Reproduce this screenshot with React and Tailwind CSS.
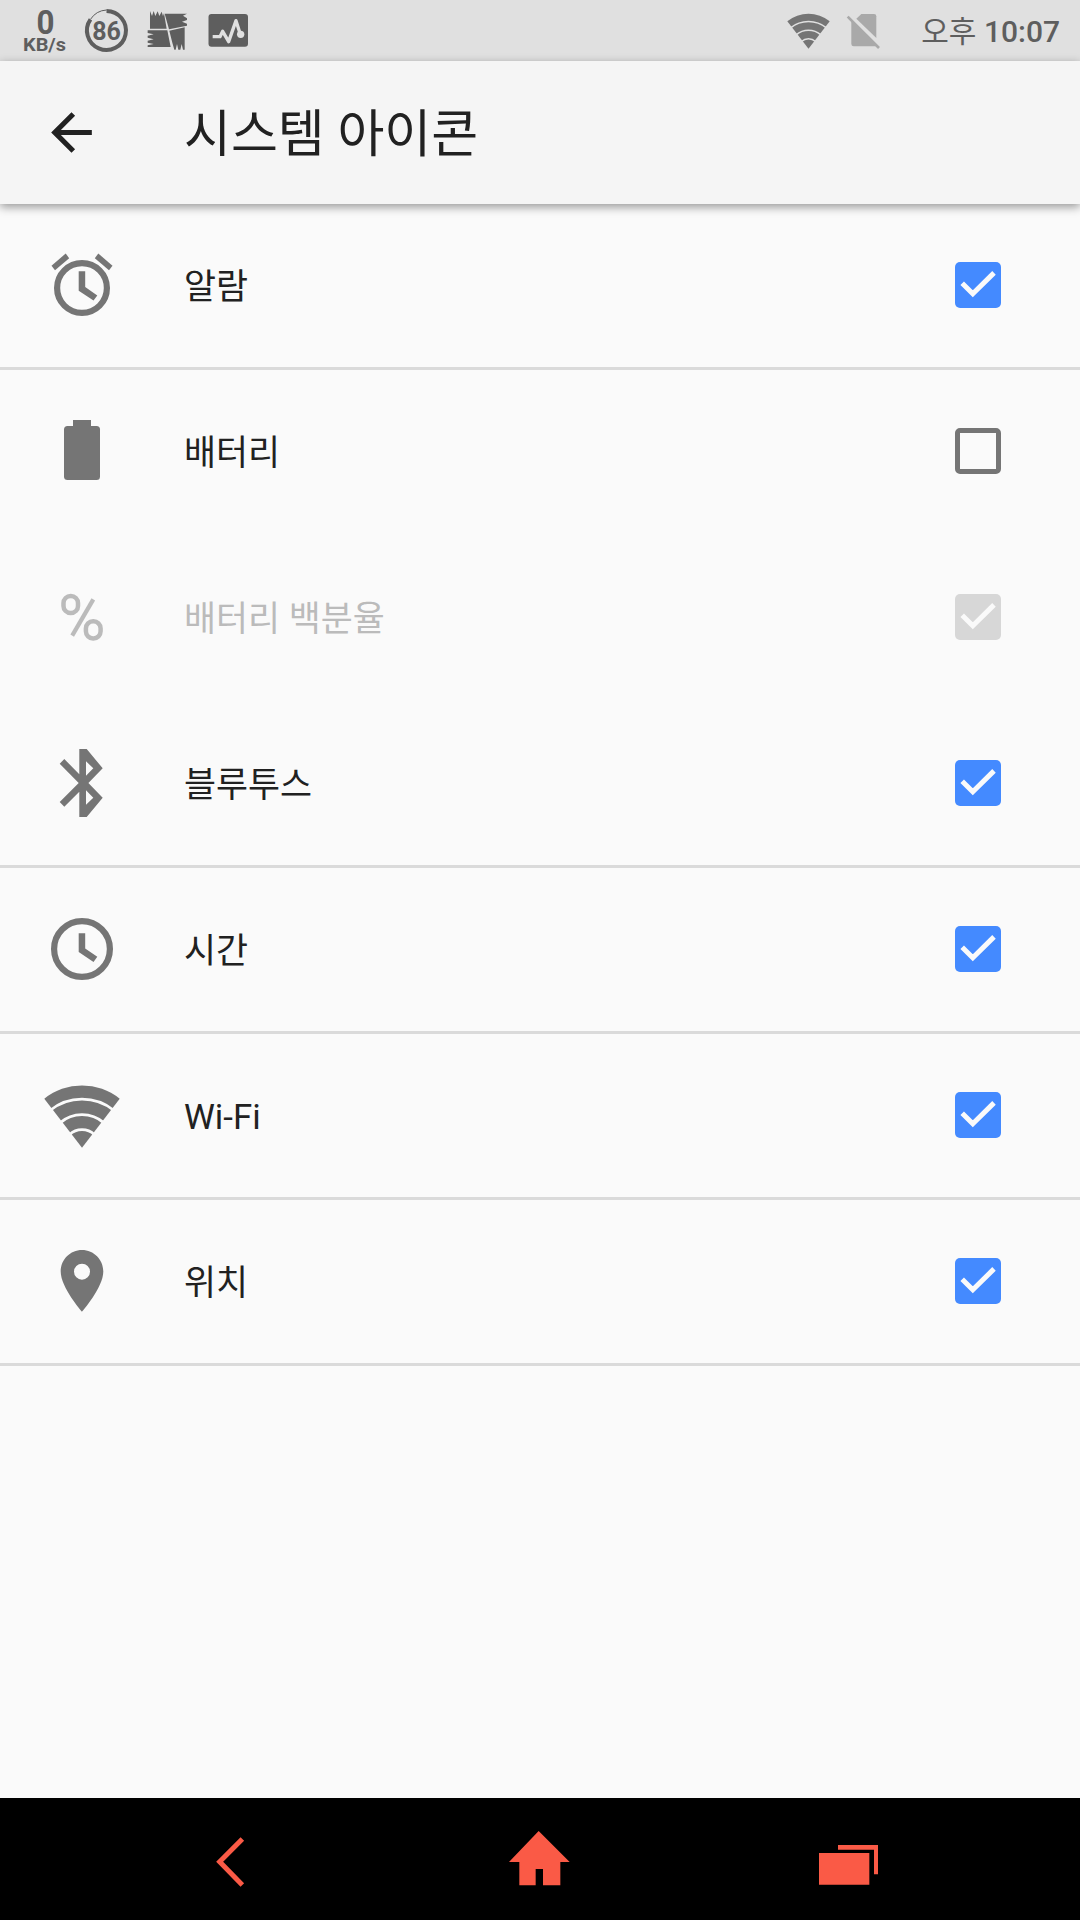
import { MdArrowBack } from 'react-icons/md';

function WifiIcon({ className, gapClass }) {
  return (
    <svg className={className} viewBox="-2 5 76 64" fill="none">
      <path d="M36 68.7L-1.7 19.7A60 60 0 0 1 73.7 19.7Z" fill="currentColor" />
      <g className={gapClass} strokeWidth="2.8">
        <path d="M4 31.5A51 51 0 0 1 68 31.5" />
        <path d="M14 43.9A33.5 33.5 0 0 1 58 43.9" />
        <path d="M23.5 55.7A18 18 0 0 1 48.5 55.7" />
      </g>
    </svg>
  );
}

function AlarmIcon() {
  return (
    <svg className="h-[72px] w-[72px]" viewBox="0 0 72 72" fill="currentColor">
      <circle cx="36" cy="39" r="24.9" fill="none" stroke="currentColor" strokeWidth="6.2" />
      <path d="M5.5 16.7L9 21.2L23.2 9.2L19.7 4.5Z" />
      <path d="M66.5 16.7L63 21.2L48.8 9.2L52.3 4.5Z" />
      <path d="M32.7 22.2H39.2V38L51.3 46.5L47.5 51.5L32.7 41.7Z" />
    </svg>
  );
}

function BatteryIcon() {
  return (
    <svg className="h-[72px] w-[72px]" viewBox="0 0 72 72" fill="currentColor">
      <rect x="27" y="5" width="18" height="8" />
      <rect x="18" y="11" width="36" height="54" rx="3.5" />
    </svg>
  );
}

function PercentIcon() {
  return (
    <svg className="h-[72px] w-[72px]" viewBox="0 0 72 72" fill="none" stroke="currentColor" strokeWidth="4.5">
      <rect x="17.5" y="14.9" width="14.5" height="17.2" rx="7.2" />
      <rect x="39.9" y="40.2" width="14.7" height="17.2" rx="7.2" />
      <path d="M47.3 18.4L26.2 54.6" strokeWidth="4.2" />
    </svg>
  );
}

function BluetoothIcon() {
  return (
    <svg className="h-[72px] w-[72px]" viewBox="0 0 72 72" fill="currentColor" fillRule="evenodd">
      <path d="M33.3 2H40.7L56.7 21.3L42.4 36L56.7 50.7L40.7 70H33.3V44.7L18.3 59.7L13.7 55L32.7 36L13.7 16.7L18.3 12L33.3 27.3ZM40 14.3V28.7L47.3 21.3ZM40 43.3V57.7L47.3 50.7Z" />
    </svg>
  );
}

function ClockIcon() {
  return (
    <svg className="h-[72px] w-[72px]" viewBox="0 0 72 72" fill="currentColor">
      <circle cx="36" cy="36" r="27.9" fill="none" stroke="currentColor" strokeWidth="6.2" />
      <path d="M32.7 20.2H39.2V35.5L51.3 43.8L47.5 48.9L32.7 39Z" />
    </svg>
  );
}

function PlaceIcon() {
  return (
    <svg className="h-[72px] w-[72px]" viewBox="0 0 72 72" fill="currentColor" fillRule="evenodd">
      <path d="M36 5C24.2 5 14.7 14.6 14.7 26.5C14.7 42.7 36 66.7 36 66.7S57.3 42.7 57.3 26.5C57.3 14.6 47.8 5 36 5ZM36 18.7A8 8 0 1 1 36 34.7A8 8 0 1 1 36 18.7Z" />
    </svg>
  );
}

const items = [
  { label: '알람', icon: <AlarmIcon />, checked: true, divider: true },
  { label: '배터리', icon: <BatteryIcon />, checked: false },
  { label: '배터리 백분율', icon: <PercentIcon />, checked: true, disabled: true },
  { label: '블루투스', icon: <BluetoothIcon />, checked: true, divider: true },
  { label: '시간', icon: <ClockIcon />, checked: true, divider: true },
  {
    label: 'Wi-Fi',
    icon: <WifiIcon className="-mx-0.5 mt-0.5 h-16 w-[76px] shrink-0" gapClass="stroke-[#fafafa]" />,
    checked: true,
    divider: true,
  },
  { label: '위치', icon: <PlaceIcon />, checked: true, divider: true },
];

function Checkbox({ checked, disabled }) {
  if (!checked) {
    return <span className="h-[46px] w-[46px] rounded-[5px] border-[5px] border-[#757575]" />;
  }
  return (
    <span className={`h-[46px] w-[46px] rounded-[5px] ${disabled ? 'bg-[#d7d7d7]' : 'bg-[#448aff]'}`}>
      <svg className="h-[46px] w-[46px]" viewBox="0 0 46 46" fill="none">
        <path d="M7.2 21.2L17.8 31.8L39 10.9" className="stroke-[#fafafa]" strokeWidth="5" />
      </svg>
    </span>
  );
}

function SettingRow({ item }) {
  return (
    <li
      className={`flex h-[166px] items-center border-b-[3px] pr-[79px] pl-[46px] ${
        item.divider ? 'border-[#dadada]' : 'border-transparent'
      }`}
    >
      <span className={`-mt-px flex h-[72px] w-[72px] items-center justify-center ${item.disabled ? 'text-[#bbbbbb]' : 'text-[#757575]'}`}>
        {item.icon}
      </span>
      <span className={`ml-[66px] flex-1 pt-[3px] text-[34.8px] leading-[52px] ${item.disabled ? 'text-[#bbbbbb]' : 'text-[#212121]'}`}>
        {item.label}
      </span>
      <span className="-mt-px flex">
        <Checkbox checked={item.checked} disabled={item.disabled} />
      </span>
    </li>
  );
}

function StatusBar() {
  return (
    <div className="flex h-[61px] items-start bg-[#e0e0e0] text-[#5e5e5e]">
      {/* network speed, battery level, notifications */}
      <svg className="h-[61px] w-[260px]" viewBox="0 0 260 61" fill="currentColor">
        <text x="45.5" y="33.7" fontSize="34" fontWeight="700" textAnchor="middle" textLength="18" lengthAdjust="spacingAndGlyphs">0</text>
        <text x="23" y="51.3" fontSize="18.5" fontWeight="700" textLength="43" lengthAdjust="spacingAndGlyphs">KB/s</text>
        <path d="M106.5 11A19.5 19.5 0 1 1 90.5 19.3" fill="none" stroke="currentColor" strokeWidth="4" />
        <path d="M90.5 19.3A20.5 20.5 0 0 1 106.5 10" fill="none" stroke="currentColor" strokeWidth="1" />
        <text x="106.5" y="39.7" fontSize="25" fontWeight="700" textAnchor="middle">86</text>
        <g transform="scale(.33333)">
          <path d="M450 86V33L456 48L461 33L466 48L473 34L478 48L485 35L489 48L492 40L500 86Z" />
          <path d="M494 41H561L549 47L561 55V60L546 65L561 71V77L507 88Z" />
          <path d="M508 92L554 82V149H549L545 132L541 149H535L531 132L527 149H523L517 128Z" />
          <path d="M443 91H502L512 141H443V136L461 132L443 128V122L461 118L443 113V107L461 103L443 99Z" />
        </g>
        <rect x="208.5" y="14" width="39.5" height="32.7" rx="3" />
        <g transform="scale(.33333)">
          <path
            d="M638 110H660L668 94L686 125L708 62L720 100"
            fill="none"
            className="stroke-[#e0e0e0]"
            strokeWidth="10"
            strokeLinejoin="round"
          />
          <circle cx="722" cy="103" r="11" className="fill-[#e0e0e0]" />
        </g>
      </svg>
      <div className="ml-auto flex h-[61px] items-center pr-5">
        <WifiIcon className="h-[36px] w-[43px] text-[#757575]" gapClass="stroke-[#e0e0e0]" />
        <svg className="ml-[16px] h-9 w-[35px] text-[#a9a9a9]" viewBox="257 40 105 108" fill="currentColor">
          <path d="M303 43H341Q348 43 348 50V115L288 57Z" />
          <path d="M273 63L348 138Q346 140 341 140H280Q273 140 273 133Z" />
          <path d="M262 51L356 145" fill="none" stroke="currentColor" strokeWidth="8" />
        </svg>
        <span className="ml-[40px] pt-[3px] text-[30px] leading-none font-medium whitespace-nowrap">
          <span className="font-normal">오후</span> 10:07
        </span>
      </div>
    </div>
  );
}

function NavBar() {
  return (
    <nav className="flex h-[122px] bg-black pl-[215px] text-[#fa5a46]">
      <svg className="h-[122px] w-[30px]" viewBox="105 54 90 366" fill="none">
        <path d="M187 177L119 245.5L187 315" stroke="currentColor" strokeWidth="15" />
      </svg>
      <svg className="ml-[263px] h-[122px] w-[63px]" viewBox="984 54 189 366" fill="currentColor">
        <path d="M1076 153L1169 246H1141V316H1089V267H1067V316H1018V246H987Z" />
      </svg>
      <svg className="ml-[247px] h-[122px] w-[61px]" viewBox="114 54 183 366" fill="currentColor">
        <path d="M117 219H268V314H117ZM174 195H294V283H282V209H174Z" />
      </svg>
    </nav>
  );
}

export default function App() {
  return (
    <div className="flex h-[1920px] w-[1080px] flex-col overflow-hidden bg-[#fafafa] font-['Roboto','Noto_Sans_CJK_KR',sans-serif]">
      <StatusBar />
      <header className="z-10 flex h-[143px] items-center bg-[#f5f5f5] pl-[41px] text-[#212121] shadow-[0_3px_9px_rgba(0,0,0,0.4)]">
        <MdArrowBack className="h-[61px] w-[61px]" />
        <h1 className="ml-[82px] pt-1 text-[51px] leading-none font-normal">시스템 아이콘</h1>
      </header>
      <ul className="flex-1">
        {items.map((item) => (
          <SettingRow key={item.label} item={item} />
        ))}
      </ul>
      <NavBar />
    </div>
  );
}
